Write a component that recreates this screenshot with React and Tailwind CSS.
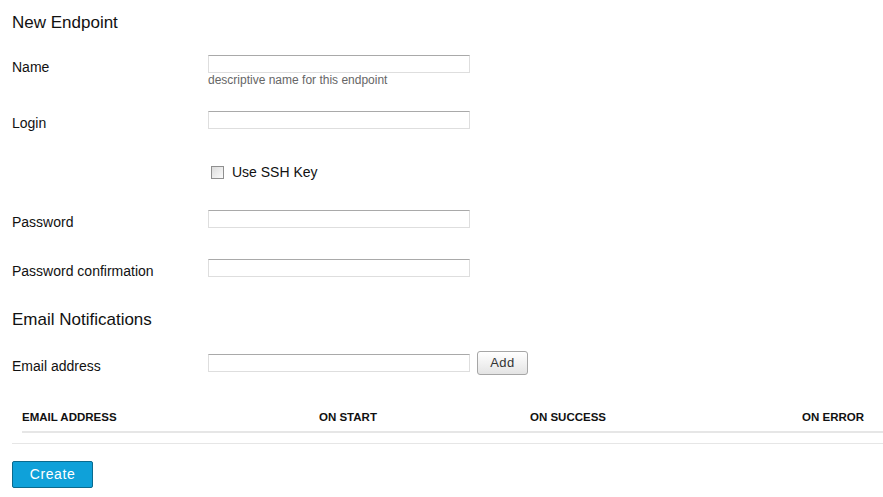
import React from "react";

// single text input with the darker top edge
function Field({ className = "" }) {
  return (
    <input
      type="text"
      className={
        "block w-[262px] h-[18px] border border-[#dedede] border-t-[#a9a9a9] bg-white outline-none " +
        className
      }
    />
  );
}

function Row({ label, children, className = "" }) {
  return (
    <div className={"flex items-start " + className}>
      <label className="w-[196px] shrink-0 pt-[2px] -mb-[4px] text-[14px] leading-[20px]">{label}</label>
      <div>{children}</div>
    </div>
  );
}

export default function App() {
  return (
    <div
      className="min-h-[497px] bg-white pl-[12px] pt-[11px] text-[#111]"
      style={{ fontFamily: '"Liberation Sans", Arial, sans-serif' }}
    >
      <h2 className="text-[17px] leading-[24px]">New Endpoint</h2>

      <form onSubmit={(e) => e.preventDefault()}>
        {/* name */}
        <Row label="Name" className="mt-[20px]">
          <Field />
          <p className="text-[12px] leading-[14px] text-[#666]">descriptive name for this endpoint</p>
        </Row>

        {/* login */}
        <Row label="Login" className="mt-[24px]">
          <Field />
        </Row>

        <div className="mt-[33px] flex items-center pl-[199px] h-[20px]">
          <span className="block w-[13px] h-[13px] border border-[#8f8f8f] bg-gradient-to-br from-[#dcdcdc] to-[#fbfbfb]" />
          <span className="ml-[8px] text-[14px] leading-[20px]">Use SSH Key</span>
        </div>

        <Row label="Password" className="mt-[28px]">
          <Field />
        </Row>

        <Row label="Password confirmation" className="mt-[31px]">
          <Field />
        </Row>

        <h2 className="mt-[31px] text-[17px] leading-[24px]">Email Notifications</h2>

        <div className="mt-[19px] flex items-start">
          <label className="w-[196px] shrink-0 pt-[5px] -mb-[1px] text-[14px] leading-[20px]">Email address</label>
          <Field className="mt-[3px]" />
          <button
            type="button"
            className="ml-[7px] w-[51px] h-[24px] rounded-[3px] border border-[#a6a6a6] bg-gradient-to-b from-white to-[#e4e4e4] text-[13px] tracking-[0.5px] text-[#333]"
          >
            Add
          </button>
        </div>

        {/* notifications table */}
        <div className="mt-[35px] ml-[10px] grid grid-cols-[297px_211px_1fr_auto] border-b-2 border-[#e6e6e6] pb-[7px] text-[11.5px] font-bold leading-[14px] uppercase">
          <div>Email Address</div>
          <div>On Start</div>
          <div>On Success</div>
          <div className="pr-[19px] text-right">On Error</div>
        </div>
        <div className="mt-[10px] border-t border-[#e6e6e6]" />

        <button
          type="submit"
          className="mt-[17px] w-[81px] h-[27px] rounded-[2px] border border-[#0a6a8e] bg-[#0fa1d9] text-[14px] tracking-[0.6px] text-white"
        >
          Create
        </button>
      </form>
    </div>
  );
}
